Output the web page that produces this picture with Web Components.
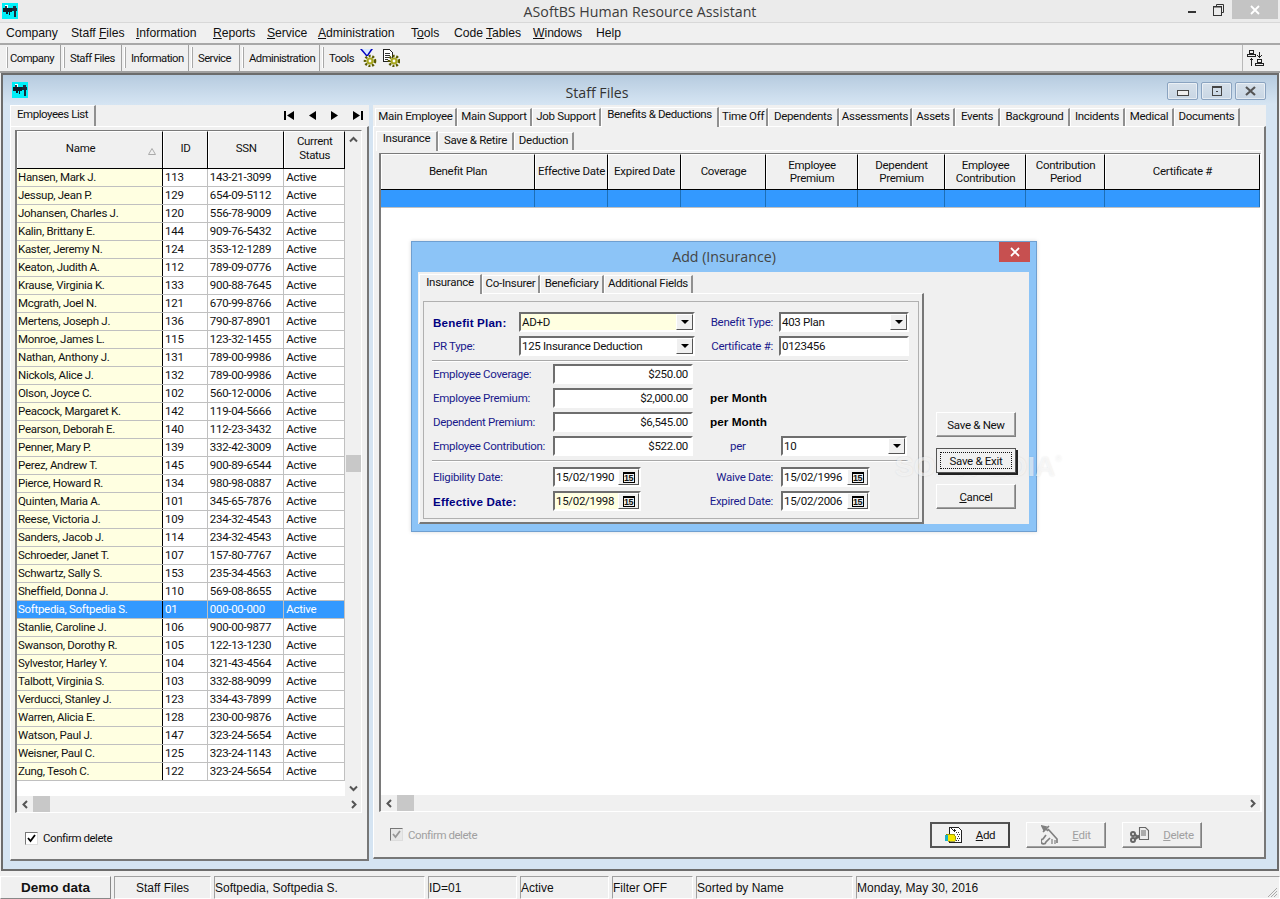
<!DOCTYPE html>
<html><head><meta charset="utf-8">
<style>
html,body{margin:0;padding:0;background:#f0f0f0;overflow:hidden}
body{width:1280px;height:899px;font:11.5px Roboto,"Liberation Sans",sans-serif;color:#000}
</style></head><body>
<x-app></x-app>
<script>
const F='Roboto,"Liberation Sans",sans-serif';
const people=`Hansen, Mark J.|113|143-21-3099
Jessup, Jean P.|129|654-09-5112
Johansen, Charles J.|120|556-78-9009
Kalin, Brittany E.|144|909-76-5432
Kaster, Jeremy N.|124|353-12-1289
Keaton, Judith A.|112|789-09-0776
Krause, Virginia K.|133|900-88-7645
Mcgrath, Joel N.|121|670-99-8766
Mertens, Joseph J.|136|790-87-8901
Monroe, James L.|115|123-32-1455
Nathan, Anthony J.|131|789-00-9986
Nickols, Alice J.|132|789-00-9986
Olson, Joyce C.|102|560-12-0006
Peacock, Margaret K.|142|119-04-5666
Pearson, Deborah E.|140|112-23-3432
Penner, Mary P.|139|332-42-3009
Perez, Andrew T.|145|900-89-6544
Pierce, Howard R.|134|980-98-0887
Quinten, Maria A.|101|345-65-7876
Reese, Victoria J.|109|234-32-4543
Sanders, Jacob J.|114|234-32-4543
Schroeder, Janet T.|107|157-80-7767
Schwartz, Sally S.|153|235-34-4563
Sheffield, Donna J.|110|569-08-8655
Softpedia, Softpedia S.|01|000-00-000
Stanlie, Caroline J.|106|900-00-9877
Swanson, Dorothy R.|105|122-13-1230
Sylvestor, Harley Y.|104|321-43-4564
Talbott, Virginia S.|103|332-88-9099
Verducci, Stanley J.|123|334-43-7899
Warren, Alicia E.|128|230-00-9876
Watson, Paul J.|147|323-24-5654
Weisner, Paul C.|125|323-24-1143
Zung, Tesoh C.|122|323-24-5654`.split('\n').map(s=>[...s.split('|'),'Active']);
const def=(name,css,html,init)=>{
  customElements.define(name,class extends HTMLElement{
    connectedCallback(){
      if(this.shadowRoot)return;
      const r=this.attachShadow({mode:'open'});
      const h=typeof html==='function'?html(this):html;
      r.innerHTML='<style>'+css+'</style>'+h;
      if(init)init(this,r);
    }
  });
};
const ICON={
app:`<svg width="16" height="16" viewBox="0 0 16 16" shape-rendering="crispEdges"><rect width="16" height="16" fill="#00f0f8"/><path fill="#10202a" d="M1 5h9v4H8v3H7V9H6v2H4V9H1z"/><rect x="3" y="2" width="3" height="3" fill="#fff"/><rect x="3" y="3" width="2" height="2" fill="#334"/><path fill="#1a2a3a" d="M10 5h5v3h-1v6h-2V8h-2z"/><rect x="11" y="3" width="3" height="2" fill="#234"/></svg>`,
gear:(x,y)=>`<g transform="translate(${x} ${y})"><circle r="5" fill="none" stroke="#5c5c00" stroke-width="2.6" stroke-dasharray="2 1.6"/><circle r="3.6" fill="#a8a820"/><circle r="1.4" fill="#fff"/></g>`,
};
ICON.funnel=`<svg width="17" height="18" viewBox="0 0 17 18"><path d="M0 0h13L8 7H6z" fill="#0000c0"/><path d="M2 0h9L7 6z" fill="#d8e8ff"/>${ICON.gear(10,12)}</svg>`;
ICON.docgear=`<svg width="17" height="18" viewBox="0 0 17 18"><path d="M.5.5h6l3 3v9h-9z" fill="#fff" stroke="#222" shape-rendering="crispEdges"/><path d="M2 4h5M2 6h5M2 8h4M2 10h3" stroke="#333" shape-rendering="crispEdges"/>${ICON.gear(11,12)}</svg>`;
ICON.users=`<svg width="18" height="18" viewBox="0 0 18 18" shape-rendering="crispEdges" fill="none" stroke="#222"><rect x="2.5" y="1.5" width="4" height="3"/><path d="M.5 7.5v-2h8v2z"/><rect x="10.5" y="10.5" width="4" height="3"/><path d="M8.5 16.5v-2h8v2z"/><path d="M12.5 2.5v6M10.5 6.5l2 2 2-2M4.5 9.5v7M2.5 11.5l2-2 2 2"/></svg>`;
ICON.add=`<svg width="18" height="18" viewBox="0 0 18 18" shape-rendering="crispEdges"><path d="M4.5 1.5h9l3 3v12h-12z" fill="#fff" stroke="#222"/><path d="M11 6h4M12 8h3M13 10h2M12 12h3M7 14h8" stroke="#333" stroke-dasharray="1 1"/><path d="M5 1l3 3 2-1 1 2-2 1-1-1z" fill="#222"/><path d="M1 8h8l2 3-1 4H3z" fill="#f5e800" stroke="#7a7a00" stroke-width=".7"/><rect x="0" y="9" width="3" height="6" fill="#18b0c8"/></svg>`;
ICON.edit=`<svg width="18" height="20" viewBox="0 0 18 20" fill="none" stroke="#808080" stroke-width="1.7"><path d="M3 2l4 4M8 1L2 7M7 4l9 10v4"/><path d="M5 10l-3 4a2.5 2.5 0 1 0 3 3l4-4"/><path d="M11 14v5M14 15v4" stroke-width="1.2"/><path d="M1 1l4 1-2 3z" fill="#808080"/></svg>`;
ICON.del=`<svg width="20" height="18" viewBox="0 0 20 18" fill="none" stroke="#666" stroke-width="2"><circle cx="3" cy="8" r="2"/><circle cx="3" cy="14" r="2"/><path d="M5 9l7 4M5 13l7-5" stroke-width="2.4"/><path d="M9.5 1.5h6l3 3v9h-9z" fill="#eee" stroke-width="1.1"/><path d="M11 5h5M11 7h5M11 9h5" stroke-width="1"/></svg>`;
const chev=d=>`<svg width="9" height="9" viewBox="0 0 9 9" fill="none" stroke="#555" stroke-width="2"><path d="${{u:'M1 6.5l3.5-3.5 3.5 3.5',d:'M1 2.5l3.5 3.5 3.5-3.5',l:'M6 1L2.5 4.5 6 8',r:'M3 1l3.5 3.5L3 8'}[d]}"/></svg>`;
const BEV_UP='border:1px solid;border-color:#fff #808080 #808080 #fff;box-shadow:inset -1px -1px 0 #a0a0a0;';
const SUNK='background:#fff;box-sizing:border-box;border:2px solid;border-color:#6e6e6e #fff #fff #6e6e6e;outline:0;';

def('x-titlebar',`:host{display:flex;height:22px;background:#ebebeb;border-bottom:1px solid #d8d8d8;box-sizing:content-box;align-items:flex-start;letter-spacing:0}
.ic{margin:3px 0 0 2px;height:16px}
.t{flex:1;text-align:center;font:14.2px/24px "Open Sans",sans-serif;color:#3c3c3c;margin-left:74px}
.min{width:8px;height:2px;background:#333;margin:11px 0 0 0;}
.r{width:46px;height:19px;background:#c4c4c4;margin-left:8px;margin-right:2px;display:flex;align-items:center;justify-content:center}
svg{display:block}`,
`<div class="ic">${ICON.app}</div><div class="t">ASoftBS Human Resource Assistant</div>
<div class="min"></div><svg width="11" height="12" style="margin:4px 0 0 17px" viewBox="0 0 11 12" fill="none" stroke="#333"><path d="M3.5 2.5v-2h7v8h-2"/><rect x=".5" y="2.5" width="8" height="9"/><path d="M1 3h7" stroke-width="1"/></svg>
<div class="r"><svg width="10" height="10" viewBox="0 0 10 10" stroke="#fff" stroke-width="1.8"><path d="M1 1l8 8M9 1l-8 8"/></svg></div>`);

def('x-menubar',`:host{display:flex;height:20px;background:#f0f0f0;border-bottom:2px solid #a8a8a8;font:12.2px/20px "Liberation Sans",sans-serif;color:#111;letter-spacing:-.05px}
span{position:static;flex:0 0 auto} u{text-underline-offset:1px}`,
()=>{const m=[[6,'Company'],[71,'Staff <u>F</u>iles'],[136,'<u>I</u>nformation'],[213,'<u>R</u>eports'],[267,'<u>S</u>ervice'],[318,'<u>A</u>dministration'],[411,'T<u>o</u>ols'],[454,'Code <u>T</u>ables'],[533,'<u>W</u>indows'],[596,'Help']];
 return m.map((x,i)=>`<span style="width:${(m[i+1]?m[i+1][0]:700)-x[0]}px;${i==0?'margin-left:6px':''}">${x[1]}</span>`).join('')});

def('x-band',`:host{display:flex;align-items:center;height:100%;box-sizing:border-box;padding-left:var(--pl,9px);border-right:1px solid #a0a0a0;position:relative;white-space:nowrap;gap:6px}
i{position:absolute;left:2px;top:2px;bottom:3px;width:1px;background:#fff;border-right:1px solid #a8a8a8}`,`<i></i><slot></slot>`);

def('x-toolbar',`:host{display:flex;height:26px;background:#f0f0f0;border-bottom:2px solid #a0a0a0;padding:0 0 0 4px;box-sizing:content-box;font:11.3px ${F};letter-spacing:-.55px;color:#111}
.sp{flex:1}.end{width:38px;border-left:1px solid #b8b8b8;display:flex;align-items:center;padding-left:4px;box-sizing:border-box}
::slotted(svg){display:block}`,`<slot></slot><div class="sp"></div><div class="end">${ICON.users}</div>`);

def('x-tab',`:host{display:flex;align-items:center;justify-content:center;box-sizing:border-box;height:18px;align-self:flex-end;background:#f0f0f0;border-top:1px solid #fff;border-left:1px solid #fff;border-right:2px solid #909090;white-space:nowrap;font:11.5px ${F};color:#111;padding-bottom:3px}
:host([active]){height:20px;padding-bottom:var(--pb,5px);z-index:1;margin-bottom:-1px;border-top-color:#fff}`,`<slot></slot>`);

def('x-vscroll',`:host{display:flex;flex-direction:column;width:16px;background:#f0f0f0;align-items:stretch}
.a{height:16px;display:flex;align-items:center;justify-content:center;flex:none}
.s1{height:308px;flex:none}.s2{flex:1}.th{height:17px;background:#c8c8c8;margin:0 0 0 1px;flex:none}`,
`<div class="a" style="height:16px;margin-top:0">${chev('u')}</div><div class="s1"></div><div class="th"></div><div class="s2"></div><div class="a">${chev('d')}</div>`);

def('x-hscroll',`:host{display:flex;height:16px;background:#f0f0f0;align-items:stretch}
.a{width:16px;display:flex;align-items:center;justify-content:center;flex:none}
.th{width:17px;background:#c8c8c8;flex:none}.s{flex:1}`,
`<div class="a">${chev('l')}</div><div class="th"></div><div class="s"></div><div class="a">${chev('r')}</div>`);

def('x-grid',`:host{display:flex;box-sizing:border-box;border:1px solid;border-color:#7a7a7a #fff #fff #7a7a7a;border-left-width:2px;background:#f0f0f0;font:11.5px ${F}}
.main{flex:1;display:flex;flex-direction:column;min-width:0}
.body{flex:1;background:#fff;overflow:hidden;position:relative}
.hd{display:flex;border-bottom:1px solid #000;flex:none;background:#f0f0f0}
.hd div{box-sizing:border-box;border-right:1px solid #000;border-left:1px solid #fff;border-top:1px solid #fff;display:flex;align-items:center;justify-content:center;text-align:center;line-height:13.5px;position:relative;color:#111}
.hd svg{position:absolute;right:6px;top:16px}
.row{display:flex;height:18px;box-sizing:border-box;border-bottom:1px solid #c0c0c0;line-height:17px}
.row div{box-sizing:border-box;border-right:1px solid #c0c0c0;padding-left:2px;white-space:nowrap;overflow:hidden;color:#111}
.row .k{background:#ffffe1;border-right-color:#000;padding-left:1px}
.row.sel{background:#3399ff}.row.sel div,.row.sel .k{background:#3399ff;color:#fff}
.row.blue{background:#3399ff}.row.blue div{background:#3399ff;border-right-color:#1c6fb8}
.wrap{display:flex;flex:1;min-height:0}`,
g=>{
 const root=g.getRootNode().host;
 const left=root&&root.localName==='x-left';
 const c=left?[['Name',147],['ID',45],['SSN',77],['Current<br>Status',61]]:[['Benefit Plan',154],['Effective Date',73],['Expired Date',73],['Coverage',85],['Employee<br>Premium',92],['Dependent<br>Premium',87],['Employee<br>Contribution',81],['Contribution<br>Period',79],['Certificate #',155]];
 const hh=left?37:35, data=left?people:[[]], sel=left?24:-1, blue=!left;
 const hd=`<div class="hd" style="height:${hh}px">`+c.map((x,i)=>`<div style="width:${x[1]}px;${left?'padding-bottom:3px;':''}${left&&i==0?'padding-right:19px':''}">${x[0]}${left&&i==0?'<svg width="8" height="7" viewBox="0 0 8 7"><path d="M.5 6.5L4 .5l3.5 6z" fill="none" stroke="#aaa"/></svg>':''}</div>`).join('')+`</div>`;
 const rows=data.map((r,i)=>`<div class="row ${i==sel?'sel':''} ${blue?'blue':''}">`+c.map((x,j)=>`<div class="${j==0&&!blue?'k':''}" style="width:${x[1]}px">${r[j]||''}</div>`).join('')+`</div>`).join('');
 return `<div class="main"><div class="wrap"><div style="flex:1;display:flex;flex-direction:column;min-width:0">${hd}<div class="body">${rows}</div></div>${left?'<x-vscroll></x-vscroll>':''}</div><x-hscroll></x-hscroll></div>`;
});

def('x-check',`:host{display:flex;align-items:center;gap:5px;font:11.5px ${F};letter-spacing:-.45px;color:#111}
:host([disabled]){color:#a0a0a0}
.b{width:13px;height:13px;box-sizing:border-box;background:#fff;border:1px solid;border-color:#777 #ddd #ddd #777;display:block}
:host([disabled]) .b{background:#e8e8e8}`,
t=>`<svg class="b" viewBox="0 0 11 11"><path d="M2 5l2.5 3L9 2" fill="none" stroke="${t.hasAttribute('disabled')?'#999':'#000'}" stroke-width="1.8"/></svg><slot></slot>`);

def('x-btn',`:host{display:flex;align-items:center;justify-content:center;box-sizing:border-box;background:#f0f0f0;${BEV_UP}font:11.5px ${F};color:#111;gap:13px;position:relative}
:host([def]){border:2px solid;border-color:#555 #444 #555 #555;box-shadow:none}
:host([disabled]){color:#a0a0a0}
:host([focus]) {box-shadow:2px 2px 0 #222;border:1px solid #555}
:host([focus])::after{content:"";position:absolute;inset:3px;border:1px dotted #111}
::slotted(svg){display:block}`,`<slot></slot>`);

def('x-field',`:host{display:block;${SUNK}height:20px;padding:0 2px 0 1px;font:11.5px/16px ${F};color:#111;white-space:nowrap;overflow:hidden}
:host([right]){text-align:right;padding-right:3px}`,`<slot></slot>`);

def('x-combo',`:host{display:flex;${SUNK}height:20px;font:11.5px/16px ${F};color:#111;white-space:nowrap;overflow:hidden}
:host([req]) .v{background:#ffffe1}
.v{flex:1;padding-left:1px;background:#fff}
.b{width:17px;background:#f0f0f0;border:1px solid;border-color:#fff #555 #555 #fff;box-sizing:border-box;display:flex;align-items:center;justify-content:center}
.b i{width:0;height:0;border:4px solid transparent;border-top:4px solid #000;border-bottom:0;display:block}`,
`<div class="v"><slot></slot></div><div class="b"><i></i></div>`);

def('x-date',`:host{display:flex;${SUNK}height:20px;font:11.5px/16px ${F};color:#111;white-space:nowrap;overflow:hidden}
:host([req]) .v{background:#ffffe1}
.v{flex:1;padding-left:1px;background:#fff}
.b{width:21px;background:#f0f0f0;border:1px solid;border-color:#fff #555 #555 #fff;box-sizing:border-box;display:flex;align-items:center;justify-content:center}
.c{width:12px;height:11px;border:1px solid #000;border-top:2px solid #000;box-sizing:border-box;font:700 9px/9px "Liberation Sans",sans-serif;text-align:center;letter-spacing:-.4px;overflow:hidden}`,
`<div class="v"><slot></slot></div><div class="b"><div class="c">15</div></div>`);

def('x-lb',`:host{display:flex;align-items:center;font:11.5px ${F};color:#1a1a8c;white-space:nowrap;height:20px}
:host([b]){font:700 11.6px "Liberation Sans",sans-serif;color:#000080;letter-spacing:.2px}
:host([r]){justify-content:flex-end;padding-right:6px}`,`<slot></slot>`);

def('x-watermark',`:host{position:absolute;left:483px;top:209px;font:700 28px "Liberation Sans",sans-serif;letter-spacing:0;color:rgba(255,255,255,.6);text-shadow:0 0 2px rgba(0,0,0,.1);pointer-events:none;white-space:nowrap}
sup{font-size:9px;font-weight:400;vertical-align:14px;line-height:0}`,`<slot></slot><sup>®</sup>`);

def('x-dialog',`:host{position:absolute;left:411px;top:241px;width:626px;height:291px;box-sizing:border-box;background:#8cc4f7;border:1px solid #6f9fd0;display:flex;flex-direction:column;box-shadow:0 0 4px rgba(0,0,0,.15)}
.title{height:30px;flex:none;text-align:center;font:14.2px/30px "Open Sans",sans-serif;color:#444;position:relative;letter-spacing:0}
.x{position:absolute;right:6px;top:0;width:31px;height:20px;background:#c75050;display:flex;align-items:center;justify-content:center}
.in{margin:0 7px 7px 6px;flex:1;background:#f0f0f0;display:flex;min-height:0;padding:1px 0 0 1px}
.left{width:505px;display:flex;flex-direction:column;flex:none}
.strip{display:flex;height:20px;flex:none}
.page{flex:1;border-top:1px solid #fff;border-right:2px solid #777;border-bottom:2px solid #777;border-left:1px solid #fff;padding:7px 3px 3px 3px;display:flex;background:#f0f0f0;min-height:0}
.group{flex:1;border:1px solid;border-color:#999 #fff #fff #999;outline:1px solid #b0b0b0;outline-offset:-1px;box-sizing:border-box;padding:10px 0 0 9px}
.g1,.g2,.g3{display:grid;row-gap:4px}
.g1{grid-template-columns:86px 176px 84px 130px}
.g2{grid-template-columns:120px 140px 88px 126px;height:92px}
.g3{grid-template-columns:120px 88px 140px 89px}
hr{border:0;height:2px;background:#a8a8a8;border-bottom:1px solid #fff;box-sizing:border-box;margin:4px 10px 2px -1px}
.pm{font:700 11.8px "Liberation Sans",sans-serif;display:flex;align-items:center;padding-left:17px;color:#000;letter-spacing:0}
.per{display:flex;align-items:center;padding-left:37px;color:#1a1a8c;font-size:11.5px}
.right{flex:1;display:flex;flex-direction:column;padding:139px 0 0 12px;gap:11px;align-items:flex-start}
.right x-btn{width:80px;height:25px}
u{text-underline-offset:1px}`,
`<div class="title">Add (Insurance)<div class="x"><svg width="10" height="10" viewBox="0 0 10 10" stroke="#fff" stroke-width="1.8"><path d="M1 1l8 8M9 1l-8 8"/></svg></div></div>
<x-watermark>SOFTPEDIA</x-watermark>
<div class="in"><div class="left">
<div class="strip"><x-tab active style="width:63px">Insurance</x-tab><x-tab style="width:58px">Co-Insurer</x-tab><x-tab style="width:64px">Beneficiary</x-tab><x-tab style="width:89px">Additional Fields</x-tab></div>
<div class="page"><div class="group">
<div class="g1">
<x-lb b>Benefit Plan:</x-lb><x-combo req>AD+D</x-combo><x-lb r>Benefit Type:</x-lb><x-combo>403 Plan</x-combo>
<x-lb>PR Type:</x-lb><x-combo>125 Insurance Deduction</x-combo><x-lb r>Certificate #:</x-lb><x-field>0123456</x-field>
</div><hr>
<div class="g2">
<x-lb>Employee Coverage:</x-lb><x-field right>$250.00</x-field><div></div><div></div>
<x-lb>Employee Premium:</x-lb><x-field right>$2,000.00</x-field><div class="pm" style="grid-column:span 2">per Month</div>
<x-lb>Dependent Premium:</x-lb><x-field right>$6,545.00</x-field><div class="pm" style="grid-column:span 2">per Month</div>
<x-lb>Employee Contribution:</x-lb><x-field right>$522.00</x-field><div class="per">per</div><x-combo>10</x-combo>
</div><hr style="margin-top:4px;margin-bottom:5px">
<div class="g3">
<x-lb>Eligibility Date:</x-lb><x-date>15/02/1990</x-date><x-lb r style="padding-right:8px">Waive Date:</x-lb><x-date>15/02/1996</x-date>
<x-lb b>Effective Date:</x-lb><x-date req>15/02/1998</x-date><x-lb r style="padding-right:8px">Expired Date:</x-lb><x-date>15/02/2006</x-date>
</div>
</div></div></div>
<div class="right"><x-btn>Save &amp; New</x-btn><x-btn focus>Save &amp; Exit</x-btn><x-btn><span><u>C</u>ancel</span></x-btn></div>
</div>`);

def('x-left',`:host{display:flex;flex-direction:column;width:359px;height:756px;margin-left:7px;flex:none;background:#f0f0f0;font:11.5px ${F}}
.strip{display:flex;height:21px;flex:none;align-items:flex-end;position:relative}
.nav{margin-left:auto;display:flex;align-items:center;gap:11px;height:20px;padding-right:5px;padding-bottom:1px}
.page{flex:1;border-top:1px solid #fff;border-right:2px solid #777;border-bottom:2px solid #777;border-left:1px solid #fff;padding:3px 5px 0 4px;display:flex;flex-direction:column;min-height:0}
svg{display:block}
x-grid{height:683px;flex:none}
x-check{margin:18px 0 0 10px}`,
`<div class="strip"><x-tab active style="width:86px;height:21px;margin-bottom:0;letter-spacing:-.45px">Employees List</x-tab><div class="nav">
<svg width="12" height="9" viewBox="0 0 12 9"><path d="M1 0h2v9H1zM11 0v9L4 4.5z"/></svg>
<svg width="12" height="9" viewBox="0 0 12 9"><path d="M10 0v9L3 4.5z"/></svg>
<svg width="12" height="9" viewBox="0 0 12 9"><path d="M2 0v9l7-4.5z"/></svg>
<svg width="12" height="9" viewBox="0 0 12 9"><path d="M1 0v9l7-4.5zM9 0h2v9H9z"/></svg></div></div>
<div class="page"><x-grid id="g"></x-grid><x-check>Confirm delete</x-check></div>`);

def('x-right',`:host{display:flex;flex-direction:column;width:893px;height:754px;margin-left:4px;flex:none;background:#f0f0f0;font:11.5px ${F}}
.strip{display:flex;height:21px;flex:none;padding-left:2px}
.page{flex:1;border-top:1px solid #fff;border-right:2px solid #777;border-bottom:2px solid #777;border-left:1px solid #fff;display:flex;flex-direction:column;min-height:0;padding:3px 0 0 2px;box-sizing:border-box}
.sub{display:flex;height:20px;flex:none;padding-left:0}
.subpage{height:662px;flex:none;border-top:1px solid #fff;margin-right:2px;padding:2px 2px 0 3px;display:flex;box-sizing:border-box;border-right:1px solid #fff}
x-grid{flex:1}
.foot{flex:1;display:flex;align-items:center;padding:0 0 0 14px}
.foot x-btn{width:80px;height:26px;margin-left:16px}
.foot x-check{margin-right:auto}
.foot .end{width:62px;flex:none}
svg{display:block}`,
`<div class="strip">
<x-tab style="width:82px">Main Employee</x-tab><x-tab style="width:75px">Main Support</x-tab><x-tab style="width:69px">Job Support</x-tab><x-tab active style="width:118px;--pb:7px;letter-spacing:-.4px">Benefits &amp; Deductions</x-tab><x-tab style="width:49px">Time Off</x-tab><x-tab style="width:71px">Dependents</x-tab><x-tab style="width:73px">Assessments</x-tab><x-tab style="width:43px">Assets</x-tab><x-tab style="width:45px">Events</x-tab><x-tab style="width:70px">Background</x-tab><x-tab style="width:55px">Incidents</x-tab><x-tab style="width:49px">Medical</x-tab><x-tab style="width:66px">Documents</x-tab></div>
<div class="page"><div class="sub"><x-tab active style="width:62px;--pb:7px">Insurance</x-tab><x-tab style="width:76px">Save &amp; Retire</x-tab><x-tab style="width:60px">Deduction</x-tab></div>
<div class="subpage"><x-grid id="g"></x-grid></div>
<div class="foot"><x-check disabled>Confirm delete</x-check>
<x-btn def>${ICON.add}<span><u>A</u>dd</span></x-btn><x-btn disabled>${ICON.edit}<span><u>E</u>dit</span></x-btn><x-btn disabled>${ICON.del}<span><u>D</u>elete</span></x-btn><div class="end"></div></div></div>`);

def('x-mdi',`:host{display:flex;flex-direction:column;height:798px;margin:0 1px;box-sizing:border-box;border:2px solid #6c6c6c;border-bottom-width:2px;background:#d5e4f2;position:relative}
.title{height:30px;flex:none;display:flex;align-items:center;background:linear-gradient(#b6cbdf,#d6e5f3)}
.ic{margin:0 0 0 9px;height:16px;flex:none}
.t{flex:1;text-align:center;font:14.2px "Open Sans",sans-serif;color:#333;margin-right:1px;letter-spacing:0;padding-top:4px}
.bs{display:flex;gap:3px;margin:2px 11px 0 0;flex:none}
.bs div{width:31px;height:18px;box-sizing:border-box;border:1px solid #8aa3c0;border-radius:2px;background:linear-gradient(#d6e0ea,#c8d6e4);display:flex;align-items:center;justify-content:center;box-shadow:inset 0 0 0 1px rgba(255,255,255,.5)}
.body{flex:1;display:flex;min-height:0;align-items:flex-start}
svg{display:block}`,
`<div class="title"><div class="ic">${ICON.app}</div><div class="t">Staff Files</div><div class="bs">
<div><span style="width:10px;height:4px;border:1px solid #444;background:#eee;display:block;margin-top:4px"></span></div>
<div><span style="width:8px;height:7px;border:1px solid #444;border-top-width:2px;display:flex;align-items:center;justify-content:center"><span style="width:2px;height:1px;background:#444"></span></span></div>
<div><svg width="11" height="10" viewBox="0 0 11 10" fill="none" stroke="#555" stroke-width="2.2"><path d="M1 1l9 8M10 1l-9 8"/></svg></div></div></div>
<div class="body"><slot></slot></div>`);

def('x-status',`:host{display:flex;height:24px;margin-top:5px;background:#f0f0f0;font:12px "Liberation Sans",sans-serif;color:#111;position:relative;letter-spacing:0}
.g{position:absolute;right:2px;bottom:2px}`,`<slot></slot><svg class="g" width="11" height="11" viewBox="0 0 11 11" stroke="#aaa"><path d="M10 1L1 10M10 4L4 10M10 7l-3 3"/></svg>`);
def('x-cell',`:host{display:flex;align-items:center;box-sizing:border-box;height:23px;margin-right:3px;padding-left:0;border:1px solid;border-color:#a0a0a0 #fff #fff #a0a0a0;white-space:nowrap;flex:none}
:host([c]){justify-content:center}
:host([up]){border-color:#fff #888 #888 #fff;font-weight:700;font-size:13.5px}`,`<slot></slot>`);

customElements.define('x-app',class extends HTMLElement{
 connectedCallback(){
  const r=this.attachShadow({mode:'open'});
  r.innerHTML=`<style>:host{display:block;width:1280px;height:899px;position:relative;overflow:hidden;letter-spacing:-.3px}</style>
<x-titlebar></x-titlebar><x-menubar></x-menubar>
<x-toolbar><x-band style="width:57px;--pl:6px">Company</x-band><x-band style="width:61px">Staff Files</x-band><x-band style="width:67px">Information</x-band><x-band style="width:51px">Service</x-band><x-band style="width:80px">Administration</x-band><x-band style="border:0">Tools ${ICON.funnel}${ICON.docgear}</x-band></x-toolbar>
<x-mdi><x-left></x-left><x-right></x-right></x-mdi>
<x-status>
<x-cell up c style="width:111px;margin-right:3px">Demo data</x-cell><x-cell c style="width:97px">Staff Files</x-cell><x-cell style="width:211px">Softpedia, Softpedia S.</x-cell><x-cell style="width:89px">ID=01</x-cell><x-cell style="width:89px">Active</x-cell><x-cell style="width:81px">Filter OFF</x-cell><x-cell style="width:157px">Sorted by Name</x-cell><x-cell style="width:424px;margin:0">Monday, May 30, 2016</x-cell>
</x-status>
<x-dialog></x-dialog>`;
 }
});
</script>
</body></html>
